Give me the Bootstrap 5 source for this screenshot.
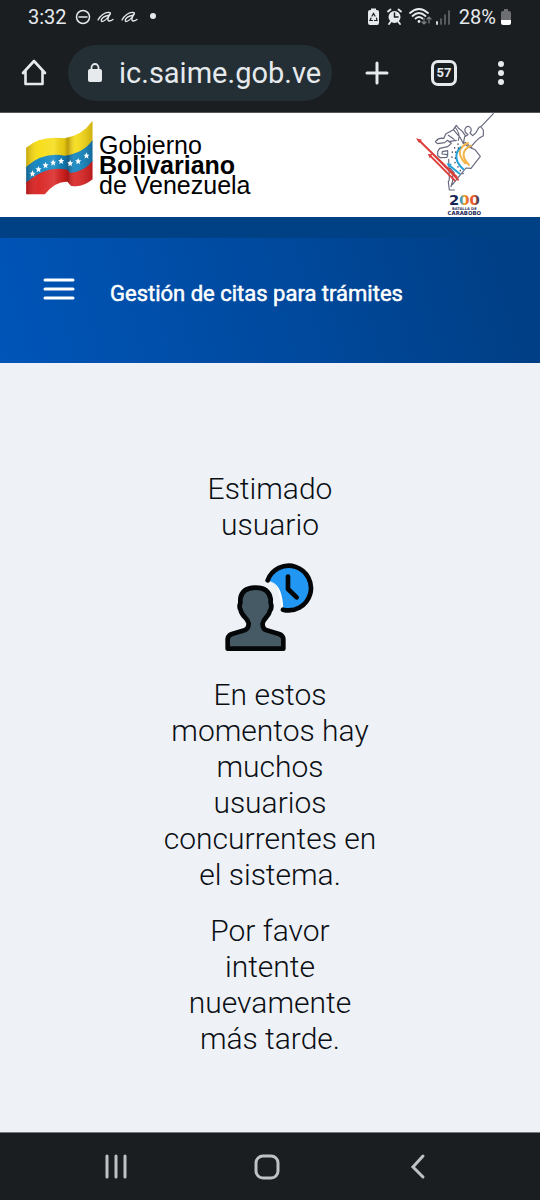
<!DOCTYPE html>
<html lang="es">
<head>
<meta charset="utf-8">
<meta name="viewport" content="width=device-width, initial-scale=1">
<title>Gestión de citas para trámites</title>
<link href="https://cdn.jsdelivr.net/npm/bootstrap@5.3.0/dist/css/bootstrap.min.css" rel="stylesheet">
<style>
  body { font-family: Roboto, "Noto Sans", sans-serif; background: #eef2f7; color: #0b0f14; }
  svg { display: block; flex: none; }
  .chrome { background: #1a1e21; color: #e6eaed; }
  .chrome .btn, .chrome .btn:hover { color: inherit; flex-shrink: 0; }
  .status { height: 34px; font-size: 20px; line-height: 34px; padding: 0 28px; }
  .toolbar { height: 79px; padding: 0 31px 0 20px; border-bottom: 1px solid #55565a; }
  .address { background: #232f35; height: 56px; padding: 0 8px 0 19px; min-width: 0; margin: 0 32px 0 20px; }
  .address input { background: none; border: 0; outline: 0; color: #e6eaed; font-size: 29px; line-height: 36px; width: 100%; min-width: 0; padding: 0; }
  .toolbar .tabs-btn { width: 26px; height: 26px; border: 3px solid #e6eaed; border-radius: 7px; font-size: 13px; line-height: 20px; font-weight: 700; margin: 0 36px 0 41px; }
  .brand-strip { height: 104px; padding: 0 43px 0 26px; }
  .brand-name { font: 25px/20px "Liberation Sans", Arial, sans-serif; color: #000; padding: 18px 0 0 6px; }
  .hero { background: linear-gradient(75deg, #0055b8 0%, #004a9f 50%, #003f86 92%); border-top: 21px solid #004085; height: 146px; padding: 0 43px; }
  .hero h1 { font-size: 22px; line-height: 28px; -webkit-text-stroke: 0.5px #fff; padding: 0 0 13px 35px; }
  .notice { width: 40%; font-size: 30px; line-height: 36px; font-weight: 300; padding-top: 52px; }
  .notice p { margin-bottom: 20px; }
  .sysnav { height: 68px; border-top: 1px solid #777a7d; padding: 0 47px 0 41px; }
  .sysnav .btn, .sysnav .btn:hover { color: #bfc1c3; }
</style>
</head>
<body class="d-flex flex-column min-vh-100">
<div class="chrome">
  <div class="status d-flex align-items-center justify-content-between">
    <div class="d-flex align-items-center">
      <span>3:32</span>
      <svg class="ms-2" width="82" height="18" viewBox="0 0 82 18" fill="none" stroke="currentColor" stroke-linecap="round">
        <circle cx="8" cy="9" r="6.500" stroke-width="1.500"/><path d="M4 9h8" stroke-width="1.500"/>
        <path id="sig" d="M23 12C25 8 30 4 34 4.500c3 .5 1 3-3 3.500-4 1-6 5-4 5.500 3 0 6-4 8-7-2 3-3 6-1 6.500q2 0 4-1.500" stroke-width="1.300"/>
        <use href="#sig" x="24"/>
        <circle cx="78" cy="8" r="3" fill="currentColor" stroke="none"/>
      </svg>
    </div>
    <div class="d-flex align-items-center">
      <svg width="84" height="20" viewBox="0 0 84 20" fill="none" stroke="currentColor" stroke-linecap="round">
        <path d="M4 3V1.500h5V3h1q2 0 2 2v11q0 2-2 2H3q-2 0-2-2V5q0-2 2-2z" fill="currentColor" stroke="none"/>
        <path d="M5 9l1.500-2.500L8 9M9.500 11l.5 2.500H7.500M5.500 13.500H3L4 11" stroke="#1a1e21" stroke-width="1.200"/>
        <circle cx="27.500" cy="10" r="6" fill="currentColor" stroke="none"/>
        <path d="M21 4.500l2.500-2M34 4.500l-2.500-2M23.500 15l-1.500 2M31.500 15l1.500 2" stroke-width="1.900"/>
        <path d="M27.500 6v4h3.500" stroke="#1a1e21" stroke-width="1.500"/>
        <path d="M43 6q9-8 18 0M45.500 9q6.500-6 13 0M48.500 11.500q3.500-3 7 0" stroke-width="1.800"/>
        <circle cx="52" cy="14.500" r="1.400" fill="currentColor" stroke="none"/>
        <path d="M57 11v6m-2-2 2 2 2-2M62 16v-6m-2 2 2-2 2 2" stroke="#7d8285" stroke-width="1.200"/>
        <path d="M70 15v2" stroke-width="1.800"/><path d="M74 12v5M78 8v9M82 4v13" stroke="#62676a" stroke-width="1.700"/>
      </svg>
      <span class="ps-2">28%</span>
      <svg class="ms-1" width="12" height="18" viewBox="0 0 12 18"><path d="M4 3V1h4v2h1q2 0 2 2v7H1V5q0-2 2-2z" fill="#6d6f72"/><path d="M1 12h10v3q0 2-2 2H3q-2 0-2-2z" fill="#fff"/></svg>
    </div>
  </div>
  <div class="toolbar d-flex align-items-center">
    <button class="btn border-0 p-0" type="button" aria-label="Inicio">
      <svg width="28" height="30" viewBox="0 0 28 30" fill="none" stroke="currentColor" stroke-width="2.600" stroke-linejoin="round" stroke-linecap="round"><path d="M3 15 14 3l11 12M5.500 13v13h17V13"/></svg>
    </button>
    <div class="address rounded-pill d-flex align-items-center flex-grow-1">
      <svg width="16" height="22" viewBox="0 0 16 22"><path d="M4.500 9V5.500a3.500 3.500 0 0 1 7 0V9" fill="none" stroke="#e6eaed" stroke-width="1.800"/><rect x="1" y="7" width="14" height="13" rx="2" fill="#e6eaed"/></svg>
      <input class="ms-3" type="text" value="ic.saime.gob.ve" aria-label="Dirección">
    </div>
    <button class="btn border-0 p-0" type="button" aria-label="Nueva pestaña">
      <svg width="26" height="26" viewBox="0 0 26 26" stroke="currentColor" stroke-width="3" stroke-linecap="round"><path d="M13 3v20M3 13h20"/></svg>
    </button>
    <button class="btn tabs-btn p-0" type="button" aria-label="Pestañas abiertas">57</button>
    <button class="btn border-0 p-0" type="button" aria-label="Menú del navegador">
      <svg width="16" height="26" viewBox="0 0 16 26" fill="currentColor"><circle cx="8" cy="4" r="3"/><circle cx="8" cy="13" r="3"/><circle cx="8" cy="22" r="3"/></svg>
    </button>
  </div>
</div>

<header>
  <div class="brand-strip bg-white d-flex justify-content-between">
    <div class="d-flex align-items-start pt-1">
      <svg class="mt-1" width="67" height="74" viewBox="48 28 200 222" aria-hidden="true">
        <defs>
          <linearGradient id="fold"><stop offset="0" stop-color="#300" stop-opacity=".25"/><stop offset=".18" stop-color="#fff" stop-opacity=".05"/><stop offset=".42" stop-color="#fff" stop-opacity=".15"/><stop offset=".57" stop-color="#300" stop-opacity=".1"/><stop offset=".63" stop-color="#300" stop-opacity=".3"/><stop offset=".74" stop-color="#fff" stop-opacity=".1"/><stop offset="1" stop-color="#300" stop-opacity=".2"/></linearGradient>
          <path id="star" d="M0-10 3-3 9-3 4 2 6 9 0 5-6 9-4 2-9-3-3-3Z" fill="#fff"/>
        </defs>
        <path d="M48 108Q90 70 163 80 215 72 247 28V90Q210 145 175 138 100 125 48 168Z" fill="#f6dc10"/>
        <path d="M48 165Q100 120 163 132 220 125 247 85V150Q220 190 178 184 110 165 48 216Z" fill="#0a83bf"/>
        <path d="M48 212Q108 160 172 174L180 184Q225 178 247 148V203Q215 230 182 222L172 210Q135 208 104 248H48Z" fill="#d8201f"/>
        <path d="M48 108Q90 70 163 80 215 72 247 28V203Q215 230 182 222L172 210Q135 208 104 248H48Z" fill="url(#fold)"/>
        <use href="#star" x="67" y="186"/><use href="#star" x="85" y="173"/><use href="#star" x="106" y="161"/><use href="#star" x="129" y="153"/><use href="#star" x="153" y="148"/><use href="#star" x="180" y="155"/><use href="#star" x="204" y="149"/><use href="#star" x="229" y="132"/>
      </svg>
      <div class="brand-name">Gobierno<br><strong>Bolivariano</strong><br>de Venezuela</div>
    </div>
    <svg width="82" height="104" viewBox="45 15 246 312" fill="none" stroke-linecap="round" stroke-linejoin="round" role="img" aria-label="200 Batalla de Carabobo">
      <defs><linearGradient id="g1" x1="0" x2="1" y1="0" y2="0"><stop offset="0" stop-color="#1c2456"/><stop offset=".33" stop-color="#1c2456"/><stop offset=".38" stop-color="#159bd4"/><stop offset=".5" stop-color="#f2aa28"/><stop offset=".67" stop-color="#e43e30"/><stop offset=".8" stop-color="#ef6b30"/><stop offset="1" stop-color="#1c2456"/></linearGradient></defs>
      <g stroke="#66687d" stroke-width="3.500">
        <path d="M280 17 244 55l-7 3-10 17-9 8-8-8q6-7 2-15-6-8-14-2-7 7 0 17l6 5-10 6-4 20 15 10 11-3 11-13 10-9 13-8v-17l-8-10"/>
        <path d="M196 83l-9-13-12-10-6-8-9 13-23 13-5 12-18 3-8 8 6 6 22-3 8-7 12 9-11 10-24 5-6 10v12l8 6 20-1 1-8-16-2 1-7 16-3v14M145 82l17 12M160 65l20 23 9 17M132 91q-16-2-21 6M165 57q18 22 10 40M146 101l23-4"/>
        <path d="M146 154l2 60-3 8 3 24h15M150 180l13 15M158 190v28l-5 18M205 116l20 9 16 20-28 36-15-1-31 38-10 12M216 119l-22-16"/>
      </g>
      <g stroke="#dc3f3c" stroke-width="6"><path d="M56 96 170 207M64 103 174 215M90 143 164 217"/></g>
      <path d="M48 91l18 4-9 10zM83 139l14-1-7 13z" fill="#dc3f3c"/>
      <g stroke-width="6"><path d="M204 105Q159 126 196 166M212 113Q172 134 207 171" stroke="#f3b449"/><path d="M181 118Q153 149 190 184M144 169l35 28" stroke="#24a3d8"/></g>
      <path d="M142 167h14l-9 11z" fill="#24a3d8"/>
      <path d="M174 108v1M164 119v1M175 120v1M157 132v1M167 132v1M156 147v1M166 150v1M165 163v1M174 176v1M181 187v1M189 196v1" stroke="#34395f" stroke-width="4"/>
      <g font-family="DejaVu Sans, sans-serif" font-weight="700" text-anchor="middle" stroke="none">
        <text x="193" y="292" font-size="44" fill="url(#g1)">200</text>
        <text x="193" y="305" font-size="11" fill="#34395f">BATALLA DE</text>
        <text x="193" y="322" font-size="16" fill="#1c2456">CARABOBO</text>
      </g>
    </svg>
  </div>
  <div class="hero d-flex align-items-center text-white">
    <button class="btn border-0 p-0 pb-4" type="button" aria-label="Menú">
      <svg width="32" height="24" viewBox="0 0 32 24" stroke="#fff" stroke-width="3" stroke-linecap="round"><path d="M2 3h28M2 12h28M2 21h28"/></svg>
    </button>
    <h1 class="fw-normal mb-0">Gestión de citas para trámites</h1>
  </div>
</header>

<main class="flex-grow-1 d-flex flex-column justify-content-center align-items-center">
  <div class="notice text-center">
    <p>Estimado usuario</p>
    <svg class="mx-auto mb-4" width="90" height="90" viewBox="33 24 270 270" stroke="#050607" stroke-width="14" stroke-linecap="round" stroke-linejoin="round" aria-hidden="true">
      <path d="M161 76A67 67 0 1 1 208 163L205 166Q201 101 172 80Z" fill="#2196f3" stroke="none"/>
      <path d="M172 80Q198 98 201 160L208 163Q206 92 172 80Z" fill="#fff" stroke="none"/>
      <path d="M161 76A67 67 0 1 1 207 164" fill="none"/>
      <path d="M222 65v37l26 25" fill="none"/>
      <path d="M41 281V252Q42 241 54 237L91 226Q104 222 104 205C101 188 82 184 80 165Q74 156 79 144V132Q83 99 123 98 164 97 170 132V144Q175 158 168 167C165 185 149 189 146 205Q145 222 158 226L195 237Q207 241 208 252V281Z" fill="#455a64"/>
    </svg>
    <p>En estos momentos hay muchos usuarios concurrentes en el sistema.</p>
    <p>Por favor intente nuevamente más tarde.</p>
  </div>
</main>

<nav class="chrome sysnav d-flex align-items-center" aria-label="Navegación del sistema">
  <button class="btn border-0 p-0 flex-fill d-flex justify-content-center" type="button" aria-label="Recientes"><svg width="28" height="28" viewBox="0 0 28 28" stroke="currentColor" stroke-width="3" stroke-linecap="round"><path d="M5 3v21M14 3v21M23 3v21"/></svg></button>
  <button class="btn border-0 p-0 flex-fill d-flex justify-content-center" type="button" aria-label="Inicio"><svg width="28" height="28" viewBox="0 0 28 28" fill="none" stroke="currentColor" stroke-width="3"><rect x="3" y="3" width="22" height="22" rx="7"/></svg></button>
  <button class="btn border-0 p-0 flex-fill d-flex justify-content-center" type="button" aria-label="Atrás"><svg width="28" height="28" viewBox="0 0 28 28" fill="none" stroke="currentColor" stroke-width="3" stroke-linecap="round"><path d="M19 3 9 14l10 10"/></svg></button>
</nav>
<script src="https://cdn.jsdelivr.net/npm/bootstrap@5.3.0/dist/js/bootstrap.bundle.min.js"></script>
</body>
</html>
